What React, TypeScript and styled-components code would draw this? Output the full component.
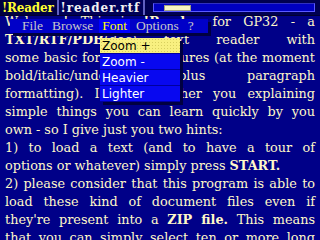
import React from "react";
import styled, { createGlobalStyle } from "styled-components";

const GlobalStyle = createGlobalStyle`
  html, body {
    margin: 0;
    padding: 0;
    background: #000088;
  }
`;

interface LinePart {
  text: string;
  bold?: boolean;
}

interface TextLine {
  parts: LinePart[];
  last?: boolean;
}

const lines: TextLine[] = [
  { parts: [{ text: "Welcome! This is " }, { text: "!Reader", bold: true }, { text: " for GP32 - a" }] },
  { parts: [{ text: "TXT/RTF/PDB", bold: true }, { text: "(doc) text reader with" }] },
  { parts: [{ text: "some basic formatting features (at the moment" }] },
  { parts: [{ text: "bold/italic/underline plus paragraph" }] },
  { parts: [{ text: "formatting). I would rather you explaining" }] },
  { parts: [{ text: "simple things you can learn quickly by you" }] },
  { parts: [{ text: "own - so I give just you two hints:" }], last: true },
  { parts: [{ text: "1) to load a text (and to have a tour of" }] },
  { parts: [{ text: "options or whatever) simply press " }, { text: "START.", bold: true }], last: true },
  { parts: [{ text: "2) please consider that this program is able to" }] },
  { parts: [{ text: "load these kind of document files even if" }] },
  { parts: [{ text: "they're present into a " }, { text: "ZIP file.", bold: true }, { text: " This means" }] },
  { parts: [{ text: "that you can simply select ten or more long" }] },
];

const menuItems = ["File", "Browse", "Font", "Options", "?"];
const fontItems = ["Zoom +", "Zoom -", "Heavier", "Lighter"];

const App: React.FC = () => {
  const progress = 17;

  return (
    <>
      <GlobalStyle />
      <Screen>
        <TopBar>
          <Tab active>!Reader</Tab>
          <Tab wide>!reader.rtf</Tab>
          <ProgressTrack>
            <ProgressFill style={{ marginLeft: "6%", width: `${progress}%` }} />
          </ProgressTrack>
        </TopBar>

        <Page>
          {lines.map((line, i) => (
            <Line key={i} last={line.last}>
              {line.parts.map((part, j) => (part.bold ? <b key={j}>{part.text}</b> : <span key={j}>{part.text}</span>))}
            </Line>
          ))}
        </Page>

        <MenuBar>
          {menuItems.map((item) => (
            <MenuTitle key={item} open={item === "Font"}>
              {item}
            </MenuTitle>
          ))}
        </MenuBar>

        <Dropdown>
          {fontItems.map((item, i) => (
            <DropItem key={item} selected={i === 0}>
              {item}
            </DropItem>
          ))}
        </Dropdown>
      </Screen>
    </>
  );
};

const Screen = styled.div`
  position: relative;
  width: 320px;
  height: 240px;
  overflow: hidden;
  background: #000088;
`;

const TopBar = styled.div`
  position: relative;
  z-index: 1;
  display: flex;
  align-items: stretch;
  height: 16px;
  background: #000050;
  border-bottom: 1px solid #000030;
  box-sizing: border-box;
`;

const Tab = styled.div<{ active?: boolean; wide?: boolean }>`
  display: flex;
  align-items: center;
  padding: 0 3px 0 2px;
  border-right: 2px solid #6060c0;
  font-family: "DejaVu Serif", "Liberation Serif", serif;
  font-weight: bold;
  font-size: 12px;
  letter-spacing: ${(p) => (p.wide ? "0.9px" : "-0.2px")};
  color: ${(p) => (p.active ? "#ffff30" : "#f0f0f0")};
  background: ${(p) => (p.active ? "#000040" : "#000058")};
`;

const ProgressTrack = styled.div`
  flex: 1;
  display: flex;
  align-items: center;
  margin: 3px 5px 3px 8px;
  border: 1px solid #5a5aff;
  border-top-color: #3030c0;
  background: #0000c0;
`;

const ProgressFill = styled.div`
  height: 6px;
  background: #f8f4c0;
  border: 1px solid #a0a080;
  box-sizing: border-box;
`;

const Page = styled.div`
  margin-top: -3px;
  padding: 0 5px;
  font-family: "DejaVu Serif", "Liberation Serif", serif;
  font-size: 12.8px;
  line-height: 18px;
  color: #fff8c8;
`;

const Line = styled.div<{ last?: boolean }>`
  text-align: ${(p) => (p.last ? "left" : "justify")};
  text-align-last: ${(p) => (p.last ? "left" : "justify")};
  b {
    font-weight: bold;
  }
`;

const MenuBar = styled.div`
  position: absolute;
  left: 10px;
  top: 19px;
  width: 198px;
  height: 14px;
  display: flex;
  align-items: stretch;
  gap: 3px;
  padding-left: 9px;
  box-sizing: border-box;
  background: #0000c8;
  box-shadow: 3px 3px 0 #000040;
  z-index: 2;
`;

const MenuTitle = styled.div<{ open?: boolean }>`
  display: flex;
  align-items: center;
  padding: 0 3px;
  font-family: "Liberation Serif", "DejaVu Serif", serif;
  font-size: 13.5px;
  color: ${(p) => (p.open ? "#ffff00" : "#c8c8c8")};
  background: ${(p) => (p.open ? "#0000ff" : "transparent")};
`;

const Dropdown = styled.div`
  position: absolute;
  left: 100px;
  top: 38px;
  width: 80px;
  display: flex;
  flex-direction: column;
  background: #0000a0;
  box-shadow: 3px 3px 0 #000040;
  z-index: 2;
`;

const DropItem = styled.div<{ selected?: boolean }>`
  height: 16px;
  padding-left: 2px;
  display: flex;
  align-items: center;
  font-family: "DejaVu Sans", "Liberation Sans", sans-serif;
  font-size: 12px;
  box-sizing: border-box;
  border-bottom: 1px solid #0000a0;
  color: ${(p) => (p.selected ? "#000000" : "#ffffff")};
  background: ${(p) =>
    p.selected
      ? "radial-gradient(circle, #d8d060 0.5px, transparent 0.8px) 0 0 / 3px 3px, #f8f080"
      : "#0808f0"};
`;

export default App;
